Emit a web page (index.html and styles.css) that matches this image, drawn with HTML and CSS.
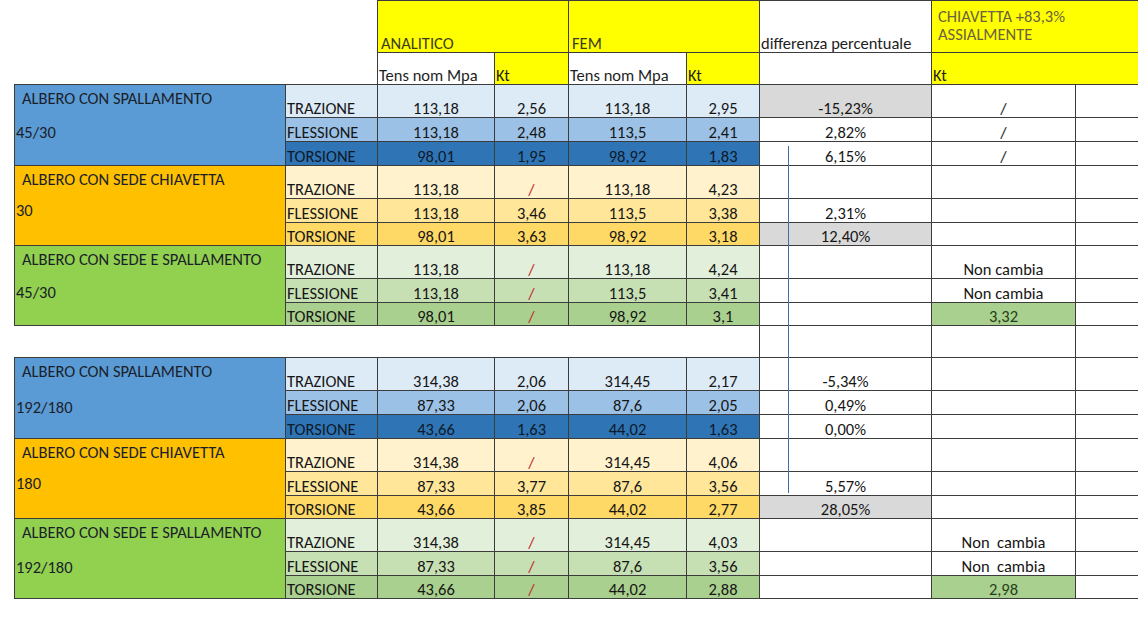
FILE: index.html
```html
<!DOCTYPE html>
<html lang="it">
<head>
<meta charset="utf-8">
<title>Confronto Kt</title>
<link rel="stylesheet" href="styles.css">
</head>
<body>
<div class="sheet">
<table class="grid">
  <colgroup>
    <col class="c-label"><col class="c-type"><col class="c-ten"><col class="c-kt"><col class="c-ten2"><col class="c-kt2"><col class="c-diff"><col class="c-chi"><col class="c-extra">
  </colgroup>
  <tbody>
    <tr class="h1">
      <td class="blank"></td><td class="blank"></td>
      <td class="yel" colspan="2">ANALITICO</td>
      <td class="yel" colspan="2">FEM</td>
      <td class="hdr-diff">differenza percentuale</td>
      <td class="yel chi-head" colspan="2">CHIAVETTA +83,3%<br>ASSIALMENTE</td>
    </tr>
    <tr class="h2">
      <td class="blank"></td><td class="blank"></td>
      <td class="sub">Tens nom Mpa</td><td class="yel sub">Kt</td>
      <td class="sub">Tens nom Mpa</td><td class="yel sub">Kt</td>
      <td class="sub"></td>
      <td class="yel sub" colspan="2">Kt</td>
    </tr>

    <!-- Gruppo 1 -->
    <tr class="ra">
      <td class="label blue" rowspan="3"><div class="l-title">ALBERO CON SPALLAMENTO</div><div class="l-sub m1">45/30</div></td>
      <td class="type b1">TRAZIONE</td><td class="num b1">113,18</td><td class="num b1">2,56</td><td class="num b1">113,18</td><td class="num b1">2,95</td>
      <td class="num gray">-15,23%</td><td class="num">/</td><td></td>
    </tr>
    <tr class="rb">
      <td class="type b2">FLESSIONE</td><td class="num b2">113,18</td><td class="num b2">2,48</td><td class="num b2">113,5</td><td class="num b2">2,41</td>
      <td class="num">2,82%</td><td class="num">/</td><td></td>
    </tr>
    <tr class="rb">
      <td class="type b3">TORSIONE</td><td class="num b3">98,01</td><td class="num b3">1,95</td><td class="num b3">98,92</td><td class="num b3">1,83</td>
      <td class="num">6,15%</td><td class="num">/</td><td></td>
    </tr>

    <!-- Gruppo 2 -->
    <tr class="ra">
      <td class="label orange" rowspan="3"><div class="l-title">ALBERO CON SEDE CHIAVETTA</div><div class="l-sub m2">30</div></td>
      <td class="type o1">TRAZIONE</td><td class="num o1">113,18</td><td class="num o1 red">/</td><td class="num o1">113,18</td><td class="num o1">4,23</td>
      <td></td><td></td><td></td>
    </tr>
    <tr class="rb">
      <td class="type o2">FLESSIONE</td><td class="num o2">113,18</td><td class="num o2">3,46</td><td class="num o2">113,5</td><td class="num o2">3,38</td>
      <td class="num">2,31%</td><td></td><td></td>
    </tr>
    <tr class="rc">
      <td class="type o3">TORSIONE</td><td class="num o3">98,01</td><td class="num o3">3,63</td><td class="num o3">98,92</td><td class="num o3">3,18</td>
      <td class="num gray">12,40%</td><td></td><td></td>
    </tr>

    <!-- Gruppo 3 -->
    <tr class="ra">
      <td class="label green" rowspan="3"><div class="l-title">ALBERO CON SEDE E SPALLAMENTO</div><div class="l-sub m3">45/30</div></td>
      <td class="type g1">TRAZIONE</td><td class="num g1">113,18</td><td class="num g1 red">/</td><td class="num g1">113,18</td><td class="num g1">4,24</td>
      <td></td><td class="num">Non cambia</td><td></td>
    </tr>
    <tr class="rb">
      <td class="type g2">FLESSIONE</td><td class="num g2">113,18</td><td class="num g2 red">/</td><td class="num g2">113,5</td><td class="num g2">3,41</td>
      <td></td><td class="num">Non cambia</td><td></td>
    </tr>
    <tr class="rc">
      <td class="type g3">TORSIONE</td><td class="num g3">98,01</td><td class="num g3 red">/</td><td class="num g3">98,92</td><td class="num g3">3,1</td>
      <td></td><td class="num gcell">3,32</td><td></td>
    </tr>

    <!-- Riga vuota -->
    <tr class="gap">
      <td class="blank"></td><td class="blank"></td><td class="blank"></td><td class="blank"></td><td class="blank"></td><td class="blank"></td>
      <td></td><td></td><td></td>
    </tr>

    <!-- Gruppo 4 -->
    <tr class="ra">
      <td class="label blue" rowspan="3"><div class="l-title">ALBERO CON SPALLAMENTO</div><div class="l-sub m4">192/180</div></td>
      <td class="type b1">TRAZIONE</td><td class="num b1">314,38</td><td class="num b1">2,06</td><td class="num b1">314,45</td><td class="num b1">2,17</td>
      <td class="num">-5,34%</td><td></td><td></td>
    </tr>
    <tr class="rb">
      <td class="type b2">FLESSIONE</td><td class="num b2">87,33</td><td class="num b2">2,06</td><td class="num b2">87,6</td><td class="num b2">2,05</td>
      <td class="num">0,49%</td><td></td><td></td>
    </tr>
    <tr class="rb">
      <td class="type b3">TORSIONE</td><td class="num b3">43,66</td><td class="num b3">1,63</td><td class="num b3">44,02</td><td class="num b3">1,63</td>
      <td class="num">0,00%</td><td></td><td></td>
    </tr>

    <!-- Gruppo 5 -->
    <tr class="ra">
      <td class="label orange" rowspan="3"><div class="l-title">ALBERO CON SEDE CHIAVETTA</div><div class="l-sub m5">180</div></td>
      <td class="type o1">TRAZIONE</td><td class="num o1">314,38</td><td class="num o1 red">/</td><td class="num o1">314,45</td><td class="num o1">4,06</td>
      <td></td><td></td><td></td>
    </tr>
    <tr class="rb">
      <td class="type o2">FLESSIONE</td><td class="num o2">87,33</td><td class="num o2">3,77</td><td class="num o2">87,6</td><td class="num o2">3,56</td>
      <td class="num">5,57%</td><td></td><td></td>
    </tr>
    <tr class="rc">
      <td class="type o3">TORSIONE</td><td class="num o3">43,66</td><td class="num o3">3,85</td><td class="num o3">44,02</td><td class="num o3">2,77</td>
      <td class="num gray">28,05%</td><td></td><td></td>
    </tr>

    <!-- Gruppo 6 -->
    <tr class="ra">
      <td class="label green" rowspan="3"><div class="l-title">ALBERO CON SEDE E SPALLAMENTO</div><div class="l-sub m6">192/180</div></td>
      <td class="type g1">TRAZIONE</td><td class="num g1">314,38</td><td class="num g1 red">/</td><td class="num g1">314,45</td><td class="num g1">4,03</td>
      <td></td><td class="num pre">Non  cambia</td><td></td>
    </tr>
    <tr class="rb">
      <td class="type g2">FLESSIONE</td><td class="num g2">87,33</td><td class="num g2 red">/</td><td class="num g2">87,6</td><td class="num g2">3,56</td>
      <td></td><td class="num pre">Non  cambia</td><td></td>
    </tr>
    <tr class="rc">
      <td class="type g3">TORSIONE</td><td class="num g3">43,66</td><td class="num g3 red">/</td><td class="num g3">44,02</td><td class="num g3">2,88</td>
      <td></td><td class="num gcell">2,98</td><td></td>
    </tr>
  </tbody>
</table>
<div class="marker-line"></div>
</div>
</body>
</html>
```
FILE: styles.css
```css
html, body {
  margin: 0;
  padding: 0;
  background: #ffffff;
  overflow: hidden;
}

body {
  font-family: "Carlito", "Lato", "Liberation Sans", sans-serif;
  font-size: 16.5px;
  color: #161616;
}

.sheet {
  position: relative;
  width: 1138px;
  height: 640px;
}

.grid {
  border-collapse: collapse;
  table-layout: fixed;
  width: 1131px;
  margin-left: 14px;
}

.c-label { width: 271px; }
.c-type { width: 92px; }
.c-ten { width: 117px; }
.c-kt { width: 74px; }
.c-ten2 { width: 118px; }
.c-kt2 { width: 73px; }
.c-diff { width: 172px; }
.c-chi { width: 144px; }
.c-extra { width: 70px; }

.grid td {
  border: 1px solid #3c3c3c;
  padding: 0 1px;
  vertical-align: bottom;
  white-space: nowrap;
  overflow: hidden;
  line-height: 18px;
}

.grid td.blank {
  border: none;
}

.h1 { height: 52px; }
.h2 { height: 32px; }
.ra { height: 33px; }
.rb { height: 24px; }
.rc { height: 23px; }
.gap { height: 32px; }

.yel { background: #ffff00; color: #3e3a1e; }
.h1 .yel { padding-left: 3px; }
.hdr-diff { color: #222222; }
.sub { padding-left: 0; color: #1e1e1e; }

.chi-head {
  vertical-align: top !important;
  white-space: normal !important;
  line-height: 18px !important;
  padding: 6px 6px 0 6px !important;
  color: #6a6240;
}

.num { text-align: center; }
.pre { white-space: pre !important; }
.type { padding-left: 1px; }

.label {
  vertical-align: top !important;
  padding: 0 !important;
  color: #1a1f2a;
}
.l-title {
  padding: 3px 0 0 7px;
  line-height: 20px;
}
.l-sub {
  padding-left: 1px;
  line-height: 20px;
}
.m1 { margin-top: 14px; }
.m2 { margin-top: 11px; }
.m3 { margin-top: 13px; }
.m4 { margin-top: 16px; }
.m5 { margin-top: 11px; }
.m6 { margin-top: 15px; }

.blue { background: #5b9bd5; }
.orange { background: #ffc000; }
.green { background: #92d050; }

.b1 { background: #ddebf7; }
.b2 { background: #9bc2e6; }
.b3 { background: #2f75b5; color: #0e1a2a; }

.o1 { background: #fff2cc; }
.o2 { background: #ffe699; }
.o3 { background: #ffd966; }

.g1 { background: #e2efda; }
.g2 { background: #c6e0b4; }
.g3 { background: #a9d08e; }

.gray { background: #d9d9d9; }
.gcell { background: #a9d08e; color: #24401a; }
.red { color: #c0282a; }

.marker-line {
  position: absolute;
  left: 788px;
  top: 146px;
  width: 1px;
  height: 347px;
  background: #3f6fa8;
}
```
